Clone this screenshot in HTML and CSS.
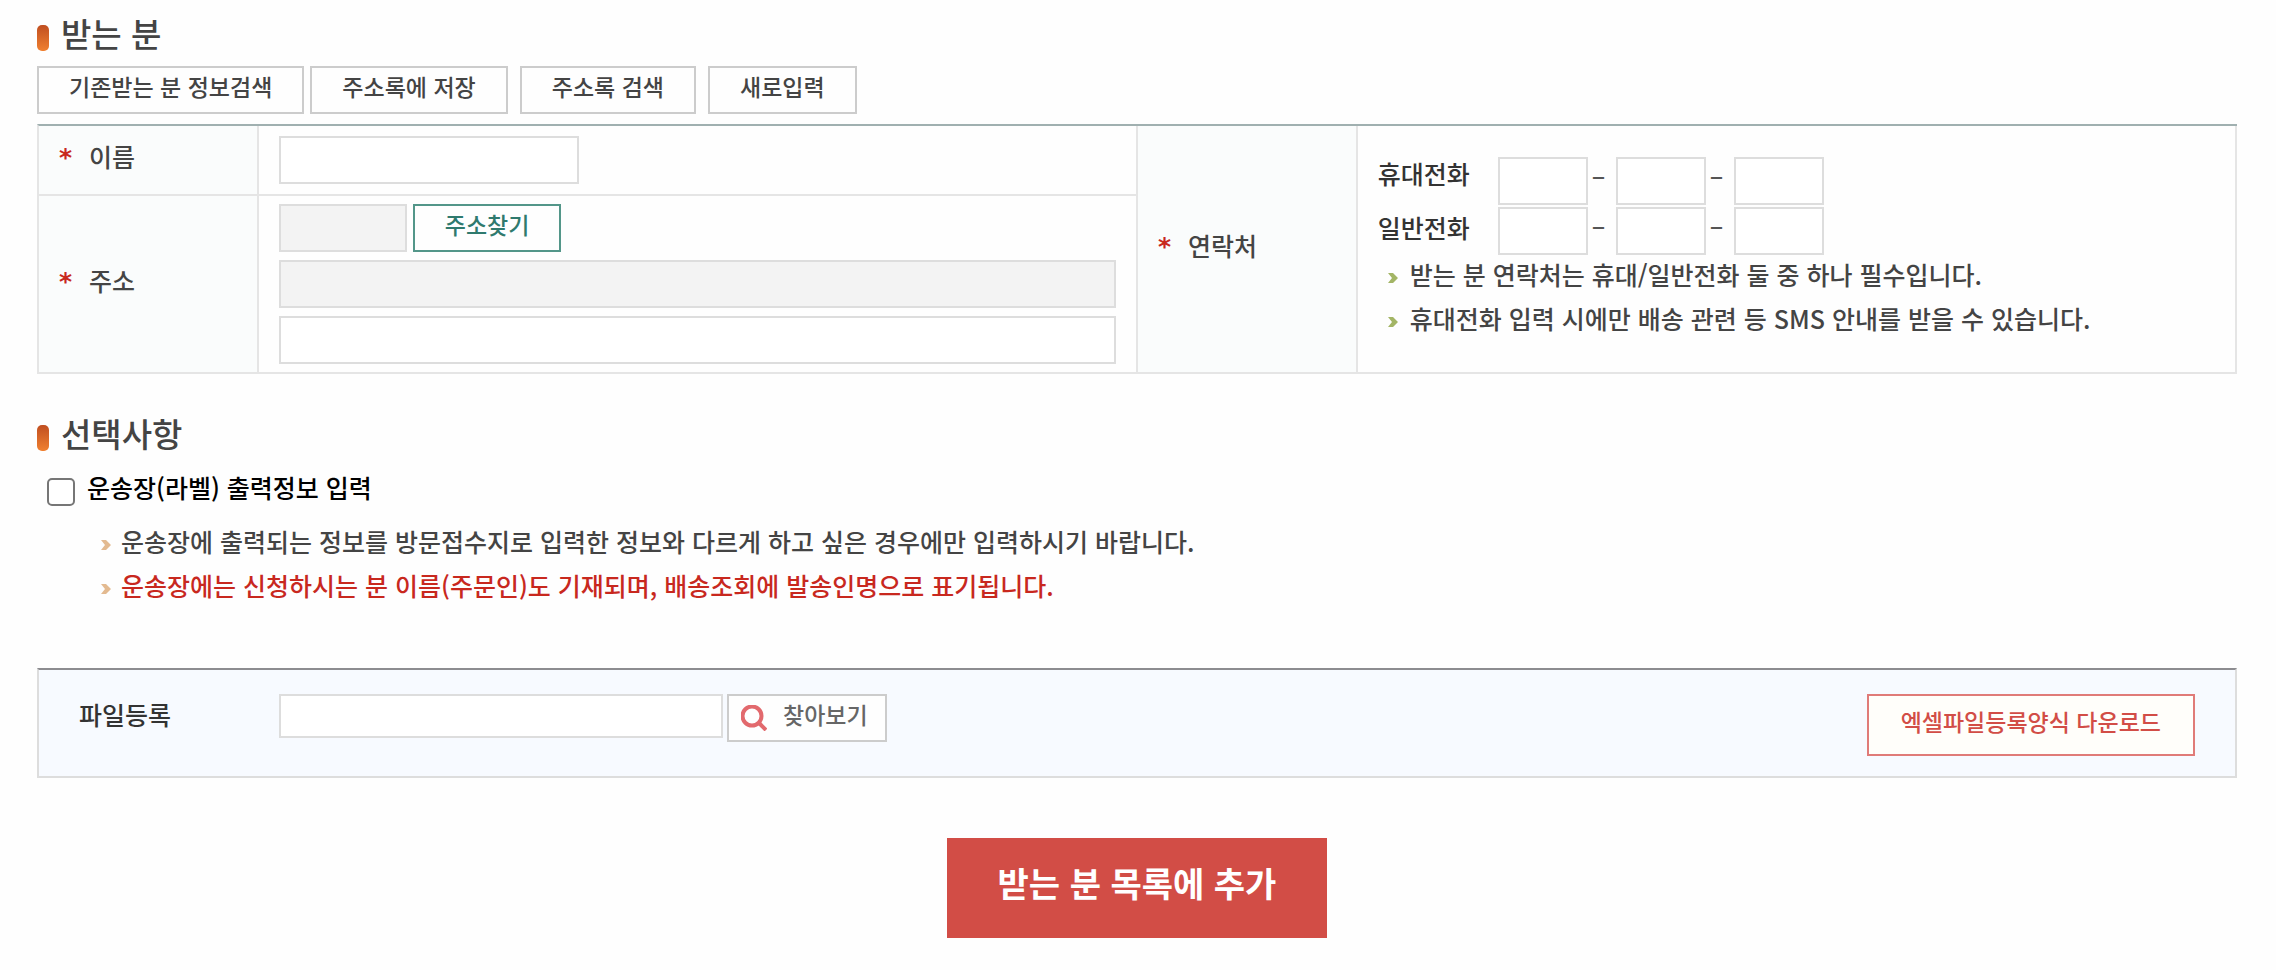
FILE: index.html
```html
<!DOCTYPE html>
<html lang="ko">
<head>
<meta charset="utf-8">
<title>받는 분</title>
<link rel="stylesheet" href="styles.css">
</head>
<body>
<form class="page">
  <section>
    <h2 class="title">받는 분</h2>
    <div class="toolbar">
      <button type="button" class="btn btn-first">기존받는 분 정보검색</button>
      <button type="button" class="btn">주소록에 저장</button>
      <button type="button" class="btn">주소록 검색</button>
      <button type="button" class="btn">새로입력</button>
    </div>
    <table class="form-table">
      <colgroup><col class="col-head"><col class="col-body"><col class="col-head"><col class="col-body"></colgroup>
      <tbody>
        <tr>
          <th scope="row"><label class="required" for="name">이름</label></th>
          <td class="cell-name"><input class="field field-name" id="name" type="text"></td>
          <th scope="row" rowspan="2"><span class="required">연락처</span></th>
          <td class="cell-contact" rowspan="2">
            <div class="phones">
              <div class="phone-labels">
                <label for="mobile1">휴대전화</label>
                <label for="tel1">일반전화</label>
              </div>
              <div class="phone-fields">
                <div class="phone-row">
                  <input class="field field-phone" id="mobile1" type="text"><span class="dash">–</span>
                  <input class="field field-phone" type="text" aria-label="휴대전화 가운데 자리"><span class="dash">–</span>
                  <input class="field field-phone" type="text" aria-label="휴대전화 끝자리">
                </div>
                <div class="phone-row">
                  <input class="field field-phone" id="tel1" type="text"><span class="dash">–</span>
                  <input class="field field-phone" type="text" aria-label="일반전화 가운데 자리"><span class="dash">–</span>
                  <input class="field field-phone" type="text" aria-label="일반전화 끝자리">
                </div>
              </div>
            </div>
            <ul class="notes notes-contact">
              <li><svg class="arrow" viewBox="0 0 10 10" aria-hidden="true"><path d="M0 0h5l5 5-5 5H0l4-5z"/></svg>받는 분 연락처는 휴대/일반전화 둘 중 하나 필수입니다.</li>
              <li><svg class="arrow" viewBox="0 0 10 10" aria-hidden="true"><path d="M0 0h5l5 5-5 5H0l4-5z"/></svg>휴대전화 입력 시에만 배송 관련 등 SMS 안내를 받을 수 있습니다.</li>
            </ul>
          </td>
        </tr>
        <tr>
          <th scope="row"><label class="required" for="address">주소</label></th>
          <td>
            <div class="address">
              <div class="zip-row">
                <input class="field field-zip" type="text" readonly aria-label="우편번호">
                <button type="button" class="btn btn-green">주소찾기</button>
              </div>
              <input class="field" id="address" type="text" readonly>
              <input class="field" type="text" aria-label="상세주소">
            </div>
          </td>
        </tr>
      </tbody>
    </table>
  </section>

  <section class="options">
    <h2 class="title">선택사항</h2>
    <div class="check-row">
      <input class="check" id="waybill" type="checkbox">
      <label for="waybill">운송장(라벨) 출력정보 입력</label>
    </div>
    <ul class="notes notes-options">
      <li><svg class="arrow" viewBox="0 0 10 10" aria-hidden="true"><path d="M0 0h5l5 5-5 5H0l4-5z"/></svg>운송장에 출력되는 정보를 방문접수지로 입력한 정보와 다르게 하고 싶은 경우에만 입력하시기 바랍니다.</li>
      <li class="warning"><svg class="arrow" viewBox="0 0 10 10" aria-hidden="true"><path d="M0 0h5l5 5-5 5H0l4-5z"/></svg>운송장에는 신청하시는 분 이름(주문인)도 기재되며, 배송조회에 발송인명으로 표기됩니다.</li>
    </ul>
  </section>

  <section class="upload">
    <label class="upload-label" for="file">파일등록</label>
    <input class="field field-file" id="file" type="text">
    <button type="button" class="btn btn-browse">
      <svg class="lens" viewBox="0 0 26 26" aria-hidden="true"><circle cx="11" cy="11" r="9.5"/><path d="M18 18l7 7"/></svg>찾아보기
    </button>
    <button type="button" class="btn btn-download">엑셀파일등록양식 다운로드</button>
  </section>

  <button type="button" class="submit">받는 분 목록에 추가</button>
</form>
</body>
</html>
```
FILE: styles.css
```css
* {
  box-sizing: border-box;
}

body {
  margin: 0;
  background: #fefefe;
  color: #444;
  font: 500 25px/44px "Noto Sans CJK KR", sans-serif;
}

input,
button {
  margin: 0;
  font: inherit;
  border-radius: 0;
}

.page {
  display: flex;
  flex-direction: column;
  padding: 9px 39px 32px 37px;
}

.title {
  display: flex;
  align-items: center;
  gap: 12px;
  margin: 0;
  font-size: 33px;
  font-weight: 500;
  line-height: 48px;
}

.title::before {
  content: "";
  width: 12px;
  height: 26px;
  margin-top: 10px;
  border-radius: 5px;
  background: linear-gradient(#c04e20, #f08030);
}

.toolbar {
  display: flex;
  gap: 12px;
  margin: 9px 0 10px;
}

.btn {
  height: 48px;
  padding: 0 30px 8px;
  border: 2px solid #ccc;
  background: #fefefe;
  color: #444;
  font-size: 23px;
  line-height: 32px;
  white-space: nowrap;
}

.btn-first {
  margin-right: -6px;
}

.btn-green {
  border-color: #539689;
  color: #2f7a6e;
}

.form-table {
  width: 100%;
  table-layout: fixed;
  border-collapse: separate;
  border-spacing: 0;
  border-top: 2px solid #a0b0b0;
  border-left: 2px solid #e5e5e5;
}

.col-head {
  width: 10%;
}

.col-body {
  width: 40%;
}

.form-table th,
.form-table td {
  padding: 8px 20px;
  border-right: 2px solid #e5e5e5;
  border-bottom: 2px solid #e5e5e5;
  text-align: left;
  vertical-align: middle;
}

.form-table th {
  padding: 0 20px 8px;
  background: #fafcfc;
  font-weight: 500;
}

.form-table .cell-name {
  padding: 10px 20px;
}

.form-table .cell-contact {
  padding: 20px 20px 0;
  vertical-align: top;
}

.required {
  display: flex;
  gap: 16px;
}

.required::before {
  content: "*";
  width: 14px;
  padding-top: 4px;
  color: #c8281e;
  font-family: "DejaVu Sans", sans-serif;
  font-weight: 700;
  line-height: 40px;
}

.field {
  display: block;
  width: 100%;
  height: 48px;
  padding: 0 8px;
  border: 2px solid #ddd;
  background: #fff;
}

.field[readonly] {
  background: #f3f3f3;
}

.field-name {
  width: 300px;
}

.field-zip {
  width: 128px;
}

.field-phone {
  width: 90px;
}

.address {
  display: grid;
  gap: 8px;
}

.zip-row {
  display: flex;
  gap: 6px;
}

.phones {
  display: flex;
  align-items: flex-start;
}

.phone-labels {
  display: flex;
  flex-direction: column;
  width: 120px;
  color: #333;
  line-height: 54px;
}

.phone-fields {
  display: grid;
  gap: 2px;
  padding-top: 11px;
}

.phone-row {
  display: flex;
}

.dash {
  width: 28px;
  padding-left: 4px;
  line-height: 34px;
  color: #555;
}

.notes {
  margin: 0;
  padding: 0;
  list-style: none;
}

.notes li {
  display: flex;
  align-items: center;
}

.notes-contact {
  display: grid;
  gap: 6px;
  padding-left: 10px;
  line-height: 38px;
}

.arrow {
  flex: none;
  width: 10px;
  height: 10px;
  margin: 8px 12px 0 0;
  fill: #a3b565;
}

.notes-options .arrow {
  margin-right: 10px;
  fill: #e3ba90;
}

.options {
  margin-top: 35px;
}

.check-row {
  display: flex;
  align-items: center;
  gap: 12px;
  margin: 8px 0 10px 10px;
  color: #000;
}

.check {
  width: 28px;
  height: 28px;
  margin-top: 10px;
  appearance: none;
  border: 2px solid #767676;
  border-radius: 5px;
  background: #fff;
}

.notes-options {
  padding-left: 64px;
}

.warning {
  color: #c8281e;
}

.upload {
  display: flex;
  align-items: flex-start;
  margin-top: 61px;
  padding: 24px 40px 20px;
  border: 2px solid #ddd;
  border-top-color: #8c8c90;
  background: #f7faff;
}

.upload-label {
  width: 200px;
  color: #333;
  line-height: 40px;
}

.field-file {
  width: 444px;
  height: 44px;
  margin-right: 4px;
}

.btn-browse {
  display: flex;
  align-items: center;
  gap: 16px;
  padding: 0 17px 8px 12px;
  color: #666;
}

.lens {
  width: 26px;
  height: 26px;
  margin-top: 8px;
  fill: none;
  stroke: #e2696d;
  stroke-width: 4;
}

.btn-download {
  height: 62px;
  margin-left: auto;
  padding: 0 32px 8px;
  border-color: #e07b78;
  background: #fffefa;
  color: #d24d46;
}

.submit {
  align-self: center;
  height: 100px;
  margin-top: 60px;
  padding: 0 51px 10px;
  border: 0;
  background: #d24d46;
  color: #fff;
  font-size: 34px;
  font-weight: 700;
}
```
